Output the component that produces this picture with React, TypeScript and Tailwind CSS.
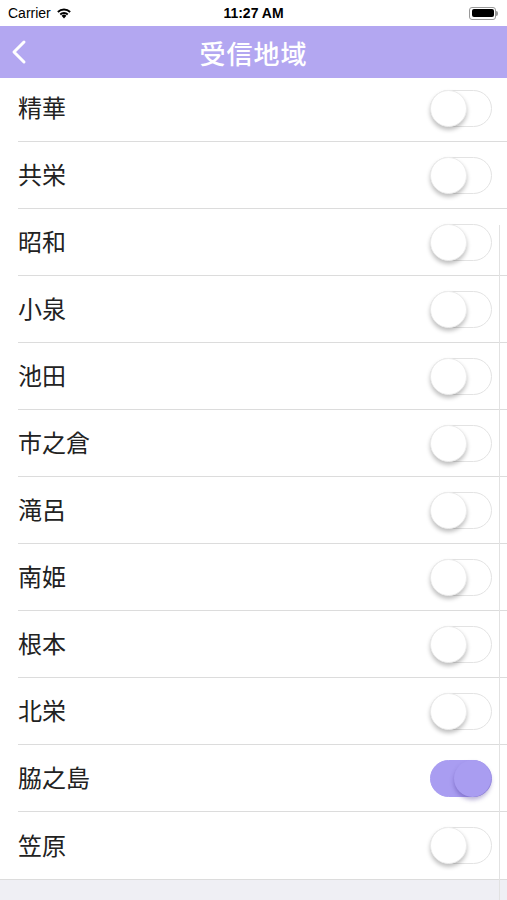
import { useState } from 'react';

const areas = [
  { name: '精華', on: false },
  { name: '共栄', on: false },
  { name: '昭和', on: false },
  { name: '小泉', on: false },
  { name: '池田', on: false },
  { name: '市之倉', on: false },
  { name: '滝呂', on: false },
  { name: '南姫', on: false },
  { name: '根本', on: false },
  { name: '北栄', on: false },
  { name: '脇之島', on: true },
  { name: '笠原', on: false },
];

function Toggle({ on, onChange }: { on: boolean; onChange: () => void }) {
  return (
    <button
      onClick={onChange}
      className={`relative w-[62px] h-[37px] rounded-full border ${on ? 'bg-[#a99df1] border-[#a99df1]' : 'bg-white border-[#e3e3e3]'}`}
    >
      <span
        className={`absolute top-[-1px] w-[37px] h-[37px] rounded-full shadow-[0_3px_4px_rgba(0,0,0,0.25)] ${on ? 'left-[23px] bg-[#a99df1] shadow-[0_3px_4px_rgba(60,40,140,0.35)]' : 'left-[-1px] bg-white border border-[#ececec]'}`}
      />
    </button>
  );
}

export default function App() {
  const [items, setItems] = useState(areas);

  const flip = (i: number) => {
    setItems(items.map((it, j) => (j === i ? { ...it, on: !it.on } : it)));
  };

  return (
    <div className="relative w-[507px] h-[900px] overflow-hidden bg-[#efeff4] font-['Noto_Sans_CJK_JP',sans-serif]">
      {/* status bar */}
      <div className="h-[26px] bg-white flex items-center justify-between px-[8px] font-['Liberation_Sans',sans-serif] text-[14px] text-black">
        <div className="flex items-center gap-[5px] w-[120px]">
          <span>Carrier</span>
          <svg width="16" height="12" viewBox="0 0 16 12">
            <path d="M8 11.5 L5.6 8.8 A3.4 3.4 0 0 1 10.4 8.8 Z" fill="#000" />
            <path d="M3.6 6.8 A6.2 6.2 0 0 1 12.4 6.8 L11.1 8.2 A4.4 4.4 0 0 0 4.9 8.2 Z" fill="#000" />
            <path d="M1.2 4.3 A9.6 9.6 0 0 1 14.8 4.3 L13.5 5.7 A7.7 7.7 0 0 0 2.5 5.7 Z" fill="#000" />
          </svg>
        </div>
        <span className="font-bold">11:27 AM</span>
        <div className="w-[120px] flex justify-end pr-[1px]">
          <div className="flex items-center">
            <div className="w-[27px] h-[13px] rounded-[3px] border border-[#999] p-[1.5px]">
              <div className="w-full h-full bg-black rounded-[2px]" />
            </div>
            <div className="w-[2px] h-[5px] bg-[#999] rounded-r-sm" />
          </div>
        </div>
      </div>

      {/* nav bar */}
      <div className="relative z-10 h-[52px] bg-[#b3a7f1] flex items-center justify-center">
        <svg className="absolute left-[10px] top-[13px]" width="18" height="26" viewBox="0 0 18 26">
          <path d="M14 3 L4 13 L14 23" fill="none" stroke="#fff" strokeWidth="3" strokeLinecap="round" strokeLinejoin="round" />
        </svg>
        <span className="text-white text-[26px] font-medium tracking-[1px]">受信地域</span>
      </div>

      {/* list */}
      <div className="bg-white -mt-[3px]">
        {items.map((it, i) => (
          <div key={it.name} className="h-[67px] pl-[18px] flex">
            <div className={`flex-1 flex items-center justify-between pr-[15px] ${i < items.length - 1 ? 'border-b' : ''} border-[#dcdcdc]`}>
              <span className="text-[24px] text-[#222] -mt-[2px]">{it.name}</span>
              <Toggle on={it.on} onChange={() => flip(i)} />
            </div>
          </div>
        ))}
      </div>
      <div className="h-px bg-[#dcdcdc]" />

      {/* scroll indicator */}
      <div className="absolute left-[499px] top-[225px] bottom-0 w-px bg-[#e2e2e2]" />
    </div>
  );
}
